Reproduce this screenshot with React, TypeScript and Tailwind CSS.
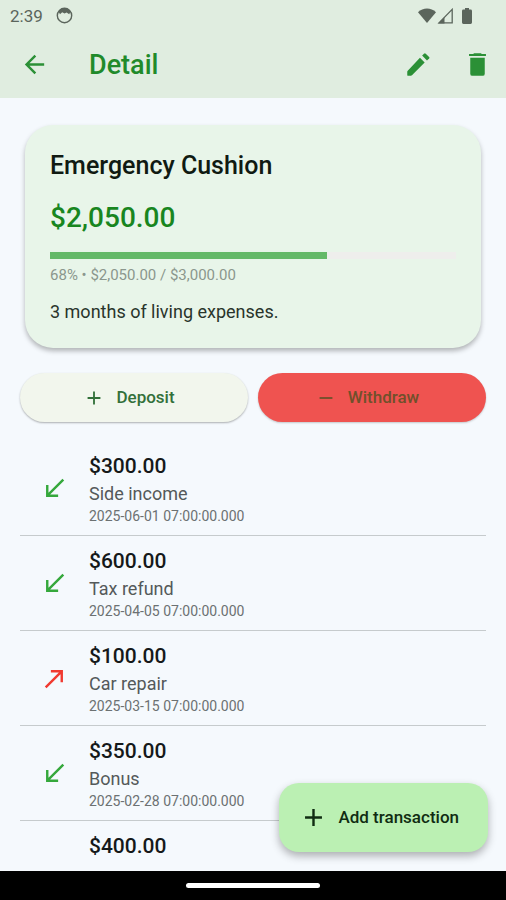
import React from "react";
import { MdAdd, MdArrowBack, MdCallMade, MdCallReceived, MdRemove } from "react-icons/md";

type Transaction = {
    id: number;
    type: "deposit" | "withdraw";
    amount: number;
    note: string;
    date: string;
};

const goal = {
    name: "Emergency Cushion",
    saved: 2050,
    target: 3000,
    description: "3 months of living expenses.",
};

const transactions: Transaction[] = [
    { id: 1, type: "deposit", amount: 300, note: "Side income", date: "2025-06-01 07:00:00.000" },
    { id: 2, type: "deposit", amount: 600, note: "Tax refund", date: "2025-04-05 07:00:00.000" },
    { id: 3, type: "withdraw", amount: 100, note: "Car repair", date: "2025-03-15 07:00:00.000" },
    { id: 4, type: "deposit", amount: 350, note: "Bonus", date: "2025-02-28 07:00:00.000" },
    { id: 5, type: "deposit", amount: 400, note: "", date: "" },
];

const money = (value: number) => `$${value.toLocaleString("en-US", { minimumFractionDigits: 2 })}`;

function PencilIcon() {
    return (
        <svg width="29" height="29" viewBox="0 0 24 24" fill="currentColor">
            <path d="M13.2 6.4L17.1 10.4L6.6 20.9Q6.2 21.3 5.7 21.3H3.4Q2.7 21.3 2.7 20.6V18.1Q2.7 17.5 3.1 17.1Z" />
            <path d="M15 4.6L16.6 3Q17.3 2.4 18 3L20.8 5.7Q21.4 6.4 20.8 7.1L19 8.6Z" />
        </svg>
    );
}

function TrashIcon() {
    return (
        <svg width="29" height="29" viewBox="0 0 24 24" fill="currentColor">
            <path d="M9.2 2.6H14.8L15.6 3.4H19V5H5V3.4H8.4Z" />
            <path d="M6 6.4H18V19.6Q18 21.4 16.2 21.4H7.8Q6 21.4 6 19.6Z" />
        </svg>
    );
}

function StatusBar() {
    return (
        <div className="flex h-[31px] items-center justify-between pl-2.5 pr-[34px] text-[#5b655c]">
            <div className="flex items-center gap-[13px]">
                <span className="text-[17px] leading-5">2:39</span>
                <svg width="17" height="17" viewBox="0 0 17 17" fill="none">
                    <circle cx="8.5" cy="8.5" r="7.2" stroke="currentColor" strokeWidth="1.4" />
                    <path d="M2.4 4.6C4.6 0.6 12.4 0.6 14.6 4.6L13.2 7.2L10.6 5.6L8.5 6.4L6.2 5.2L4 7.2Z" fill="currentColor" />
                </svg>
            </div>
            <div className="flex items-center">
                <svg width="18" height="16" viewBox="0 0 18 16">
                    <path d="M0 4.2C5 -0.6 13 -0.6 18 4.2L9 15Z" fill="currentColor" />
                </svg>
                <svg width="17" height="16" viewBox="0 0 17 16" className="ml-px">
                    <path d="M2 14.9L15.2 1.4V14.9Z" fill="none" stroke="currentColor" strokeWidth="1.3" />
                    <path d="M1 15.5L7.5 9V15.5Z" fill="currentColor" />
                </svg>
                <svg width="10" height="16" viewBox="0 0 10 16" className="ml-2">
                    <path d="M3 0H7V1.6H8.6Q10 1.6 10 3V14.6Q10 16 8.6 16H1.4Q0 16 0 14.6V3Q0 1.6 1.4 1.6H3Z" fill="currentColor" />
                </svg>
            </div>
        </div>
    );
}

function TransactionRow({ item }: { item: Transaction }) {
    const isDeposit = item.type === "deposit";

    return (
        <li className="flex h-[95px] shrink-0 items-center border-b border-[#c6cbcd] pl-5">
            <div className="w-[49px]">
                {isDeposit ? (
                    <MdCallReceived size={29} className="text-[#35a83c]" />
                ) : (
                    <MdCallMade size={29} className="text-[#f13a30]" />
                )}
            </div>
            <div>
                <div className="text-[21px] leading-7 font-medium text-[#15191a]">{money(item.amount)}</div>
                <div className="h-7 text-lg leading-7 text-[#54595a]">{item.note}</div>
                <div className="h-4 text-sm leading-4 text-[#6c7172]">{item.date}</div>
            </div>
        </li>
    );
}

export default function App() {
    const percent = Math.round((goal.saved / goal.target) * 100);

    return (
        <div className="relative flex h-screen flex-col bg-[#f5f9fd] font-[Roboto,sans-serif]">
            <header className="bg-[#e0ede0]">
                <StatusBar />
                <div className="flex h-[67px] items-center pl-5 pr-3.5 text-[#2b9036]">
                    <button type="button" aria-label="Back" className="w-[69px]">
                        <MdArrowBack size={29} />
                    </button>
                    <h1 className="flex-1 text-[27px] leading-8 font-medium text-[#218a2a]">Detail</h1>
                    <button type="button" aria-label="Edit" className="mr-[30px]">
                        <PencilIcon />
                    </button>
                    <button type="button" aria-label="Delete">
                        <TrashIcon />
                    </button>
                </div>
            </header>

            <main className="flex min-h-0 flex-1 flex-col overflow-hidden px-5 pb-3.5">
                {/* Goal card */}
                <section className="mx-[5px] mt-[27px] rounded-[28px] bg-[#e8f5e9] px-[25px] pt-[25px] pb-6 shadow-[0_3px_5px_rgba(0,0,0,0.28)]">
                    <h2 className="text-[25px] leading-8 font-medium text-[#101a12]">{goal.name}</h2>
                    <div className="mt-5 text-[28px] leading-8 font-medium text-[#18861f]">{money(goal.saved)}</div>
                    <div className="mt-[18px] h-[7px] bg-[#eeeeec]">
                        <div className="h-full bg-[#64b968]" style={{ width: `${(goal.saved / goal.target) * 100}%` }}></div>
                    </div>
                    <div className="mt-1.5 text-[15px] leading-5 text-[#8b978d]">
                        {percent}% • {money(goal.saved)} / {money(goal.target)}
                    </div>
                    <p className="mt-[15px] text-lg leading-6 text-[#29342b]">{goal.description}</p>
                </section>

                <div className="mt-[25px] flex gap-2.5">
                    <button type="button" className="flex h-[49px] flex-1 items-center justify-center gap-[11px] rounded-full bg-[#f2f6ed] pl-4 pr-[26px] text-[17px] font-medium text-[#33703a] shadow-[0_1px_2px_rgba(0,0,0,0.3)]">
                        <MdAdd size={22} />
                        Deposit
                    </button>
                    <button type="button" className="flex h-[49px] flex-1 items-center justify-center gap-[11px] rounded-full bg-[#ef5350] pl-4 pr-[26px] text-[17px] font-medium text-[#71502b] shadow-[0_1px_2px_rgba(0,0,0,0.2)]">
                        <MdRemove size={22} />
                        Withdraw
                    </button>
                </div>

                <ul className="mt-[19px] flex min-h-0 flex-1 flex-col overflow-hidden">
                    {transactions.map((item) => (
                        <TransactionRow key={item.id} item={item} />
                    ))}
                </ul>
            </main>

            <button type="button" className="absolute right-[18px] bottom-12 flex h-[69px] items-center gap-2.5 rounded-[20px] bg-[#bbf0b3] pl-5 pr-[29px] text-[17px] font-medium text-[#102c12] shadow-[0_4px_8px_rgba(0,0,0,0.3)]">
                <MdAdd size={29} />
                Add transaction
            </button>

            <footer className="flex h-[29px] shrink-0 items-center justify-center bg-black">
                <div className="h-[5px] w-[134px] rounded-full bg-white"></div>
            </footer>
        </div>
    );
}
